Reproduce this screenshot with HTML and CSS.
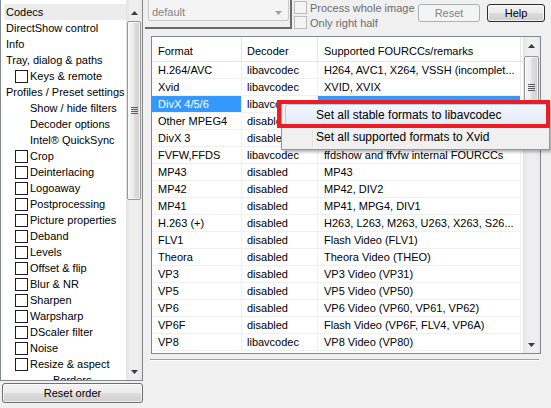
FILE: index.html
```html
<!DOCTYPE html>
<html>
<head>
<meta charset="utf-8">
<link rel="stylesheet" href="styles.css">
</head>
<body>
<div class="window">
  <div class="left">
    <div class="tree">
      <div class="tree-items">
        <div class="tree-row sel">Codecs</div>
        <div class="tree-row">DirectShow control</div>
        <div class="tree-row">Info</div>
        <div class="tree-row">Tray, dialog &amp; paths</div>
        <div class="tree-row l1"><span class="cb"></span>Keys &amp; remote</div>
        <div class="tree-row">Profiles / Preset settings</div>
        <div class="tree-row l1n">Show / hide filters</div>
        <div class="tree-row l1n">Decoder options</div>
        <div class="tree-row l1n">Intel® QuickSync</div>
        <div class="tree-row l1"><span class="cb"></span>Crop</div>
        <div class="tree-row l1"><span class="cb"></span>Deinterlacing</div>
        <div class="tree-row l1"><span class="cb"></span>Logoaway</div>
        <div class="tree-row l1"><span class="cb"></span>Postprocessing</div>
        <div class="tree-row l1"><span class="cb"></span>Picture properties</div>
        <div class="tree-row l1"><span class="cb"></span>Deband</div>
        <div class="tree-row l1"><span class="cb"></span>Levels</div>
        <div class="tree-row l1"><span class="cb"></span>Offset &amp; flip</div>
        <div class="tree-row l1"><span class="cb"></span>Blur &amp; NR</div>
        <div class="tree-row l1"><span class="cb"></span>Sharpen</div>
        <div class="tree-row l1"><span class="cb"></span>Warpsharp</div>
        <div class="tree-row l1"><span class="cb"></span>DScaler filter</div>
        <div class="tree-row l1"><span class="cb"></span>Noise</div>
        <div class="tree-row l1"><span class="cb"></span>Resize &amp; aspect</div>
        <div class="tree-row l2n">Borders</div>
      </div>
      <div class="vscroll tree-sb">
        <div class="sb-btn"><svg width="7" height="4" viewBox="0 0 7 4"><path d="M0 4L3.5 0L7 4Z" fill="#3c3c3c"/></svg></div>
        <div class="sb-thumb tree-thumb"><svg width="7" height="7" viewBox="0 0 7 7"><path d="M0 0.5H7M0 2.5H7M0 4.5H7M0 6.5H7" stroke="#5a5a5a" stroke-width="1"/></svg></div>
        <div class="sb-track"></div>
        <div class="sb-btn"><svg width="7" height="4" viewBox="0 0 7 4"><path d="M0 0L3.5 4L7 0Z" fill="#3c3c3c"/></svg></div>
      </div>
    </div>
    <button class="btn reset-order">Reset order</button>
  </div>

  <div class="right">
    <div class="topbar">
      <div class="combo-frame">
        <div class="combo"><span class="combo-text">default</span><svg class="combo-arrow" width="7" height="4" viewBox="0 0 7 4"><path d="M0 0L3.5 4L7 0Z" fill="#a0a0a0"/></svg></div>
      </div>
      <div class="checks">
        <div class="chk-row"><span class="cb dis"></span>Process whole image</div>
        <div class="chk-row"><span class="cb dis"></span>Only right half</div>
      </div>
      <button class="btn btn-sm btn-reset" disabled>Reset</button>
      <button class="btn btn-sm btn-help">Help</button>
    </div>

    <div class="listview">
      <div class="lv-body">
        <div class="lv-head">
          <div class="cell">Format</div>
          <div class="cell c2">Decoder</div>
          <div class="cell c3">Supported FOURCCs/remarks</div>
        </div>
        <div class="lv-row"><div class="cell">H.264/AVC</div><div class="cell c2">libavcodec</div><div class="cell c3">H264, AVC1, X264, VSSH (incomplet...</div></div>
        <div class="lv-row"><div class="cell">Xvid</div><div class="cell c2">libavcodec</div><div class="cell c3">XVID, XVIX</div></div>
        <div class="lv-row sel"><div class="cell">DivX 4/5/6</div><div class="cell c2">libavcodec</div><div class="cell c3">DIVX, DX50</div></div>
        <div class="lv-row"><div class="cell">Other MPEG4</div><div class="cell c2">disabled</div><div class="cell c3">FMP4, MP4V, 3IV2</div></div>
        <div class="lv-row"><div class="cell">DivX 3</div><div class="cell c2">disabled</div><div class="cell c3">DIV3, DIV4, DIV5</div></div>
        <div class="lv-row"><div class="cell">FVFW,FFDS</div><div class="cell c2">libavcodec</div><div class="cell c3">ffdshow and ffvfw internal FOURCCs</div></div>
        <div class="lv-row"><div class="cell">MP43</div><div class="cell c2">disabled</div><div class="cell c3">MP43</div></div>
        <div class="lv-row"><div class="cell">MP42</div><div class="cell c2">disabled</div><div class="cell c3">MP42, DIV2</div></div>
        <div class="lv-row"><div class="cell">MP41</div><div class="cell c2">disabled</div><div class="cell c3">MP41, MPG4, DIV1</div></div>
        <div class="lv-row"><div class="cell">H.263 (+)</div><div class="cell c2">disabled</div><div class="cell c3">H263, L263, M263, U263, X263, S26...</div></div>
        <div class="lv-row"><div class="cell">FLV1</div><div class="cell c2">disabled</div><div class="cell c3">Flash Video (FLV1)</div></div>
        <div class="lv-row"><div class="cell">Theora</div><div class="cell c2">disabled</div><div class="cell c3">Theora Video (THEO)</div></div>
        <div class="lv-row"><div class="cell">VP3</div><div class="cell c2">disabled</div><div class="cell c3">VP3 Video (VP31)</div></div>
        <div class="lv-row"><div class="cell">VP5</div><div class="cell c2">disabled</div><div class="cell c3">VP5 Video (VP50)</div></div>
        <div class="lv-row"><div class="cell">VP6</div><div class="cell c2">disabled</div><div class="cell c3">VP6 Video (VP60, VP61, VP62)</div></div>
        <div class="lv-row"><div class="cell">VP6F</div><div class="cell c2">disabled</div><div class="cell c3">Flash Video (VP6F, FLV4, VP6A)</div></div>
        <div class="lv-row"><div class="cell">VP8</div><div class="cell c2">libavcodec</div><div class="cell c3">VP8 Video (VP80)</div></div>
      </div>
      <div class="vscroll list-sb">
        <div class="sb-btn"><svg width="7" height="4" viewBox="0 0 7 4"><path d="M0 4L3.5 0L7 4Z" fill="#3c3c3c"/></svg></div>
        <div class="sb-thumb list-thumb"><svg width="7" height="7" viewBox="0 0 7 7"><path d="M0 0.5H7M0 2.5H7M0 4.5H7M0 6.5H7" stroke="#5a5a5a" stroke-width="1"/></svg></div>
        <div class="sb-track"></div>
        <div class="sb-btn"><svg width="7" height="4" viewBox="0 0 7 4"><path d="M0 0L3.5 4L7 0Z" fill="#3c3c3c"/></svg></div>
      </div>
    </div>
    <div class="separator"></div>
  </div>

  <div class="menu">
    <div class="mi hl">Set all stable formats to libavcodec</div>
    <div class="mi">Set all supported formats to Xvid</div>
  </div>
  <div class="redbox"></div>
</div>
</body>
</html>
```

FILE: styles.css
```css
* { box-sizing: border-box; }
html, body { margin: 0; padding: 0; }
body {
  width: 551px;
  height: 408px;
  overflow: hidden;
  background: #f0f0f0;
  font-family: "Liberation Sans", Arial, sans-serif;
  font-size: 11px;
  color: #000;
}
.window {
  position: relative;
  display: grid;
  grid-template-columns: 143px 406px;
  column-gap: 2px;
  width: 551px;
  height: 408px;
}

/* ---------- left tree ---------- */
.left { display: flex; flex-direction: column; }
.tree {
  height: 381px;
  display: flex;
  background: #fff;
  border: 1px solid #828790;
  border-top: 0;
}
.tree-items {
  width: 125px;
  padding-top: 4px;
  padding-left: 3px;
  overflow: hidden;
}
.tree-row {
  height: 16px;
  display: flex;
  align-items: center;
  white-space: nowrap;
  padding-left: 2px;
}
.tree-row.sel { background: #ececec; }
.tree-row.l1 { padding-left: 11px; }
.tree-row.l1n { padding-left: 26px; }
.tree-row.l2n { padding-left: 49px; }
.cb {
  flex: none;
  width: 13px;
  height: 13px;
  border: 1px solid #1e1e1e;
  background: #fff;
  margin-right: 2px;
  margin-top: 1px;
}
.cb.dis {
  border-color: #bcbcbc;
  background: #f4f4f4;
  margin-right: 3px;
  margin-top: 0;
}

/* ---------- scrollbars ---------- */
.vscroll {
  display: flex;
  flex-direction: column;
  background: linear-gradient(to right, #e4e4e4, #efefef 30%, #efefef 70%, #e8e8e8);
}
.tree-sb { width: 16px; }
.list-sb { width: 17px; }
.sb-btn {
  flex: none;
  height: 17px;
  display: flex;
  align-items: center;
  justify-content: center;
}
.tree-sb .sb-btn:first-child { margin-top: 4px; }
.sb-thumb {
  flex: none;
  margin: 0 1px;
  border: 1px solid #979797;
  border-radius: 2px;
  background: linear-gradient(to right, #f6f6f6, #ececec 45%, #dcdcdc 55%, #d2d2d2);
  display: flex;
  align-items: center;
  justify-content: center;
  box-shadow: inset 0 0 0 1px rgba(255,255,255,0.7);
}
.tree-thumb { height: 179px; }
.list-thumb { height: 63px; margin-top: 2px; }
.sb-track { flex: 1; }

/* ---------- buttons ---------- */
.btn {
  font-family: "Liberation Sans", Arial, sans-serif;
  font-size: 11px;
  color: #000;
  padding: 0;
  border: 1px solid #707070;
  border-radius: 3px;
  background: linear-gradient(#f3f3f3 0%, #ebebeb 48%, #dddddd 52%, #cfcfcf 100%);
  box-shadow: inset 0 0 0 1px rgba(255,255,255,0.65);
}
.reset-order {
  margin: 2px 0 0 2px;
  width: 141px;
  height: 20px;
}

/* ---------- top bar ---------- */
.right { display: flex; flex-direction: column; }
.topbar {
  height: 36px;
  display: flex;
  align-items: flex-start;
}
.combo-frame {
  flex: none;
  width: 147px;
  height: 29px;
  border-right: 2px solid #6a6a6a;
  border-bottom: 2px solid #6a6a6a;
  padding-left: 3px;
}
.combo {
  width: 141px;
  height: 21px;
  border: 1px solid #c9c9c9;
  border-top: 0;
  border-radius: 0 0 3px 3px;
  background: #f4f4f4;
  color: #838383;
  display: flex;
  align-items: center;
  padding: 3px 6px 0 3px;
}
.combo-arrow { margin-left: auto; margin-top: 2px; }
.checks {
  flex: none;
  width: 124px;
  margin-left: 2px;
}
.chk-row {
  height: 15px;
  display: flex;
  align-items: center;
  color: #6d6d6d;
  white-space: nowrap;
}
.btn-sm { flex: none; margin-top: 4px; height: 18px; }
.btn-reset {
  width: 62px;
  border-color: #adb2b5;
  background: #f4f4f4;
  color: #838383;
  box-shadow: none;
}
.btn-help {
  width: 58px;
  margin-left: 7px;
  border-color: #2e2e2e;
}

/* ---------- list view ---------- */
.listview {
  margin-left: 6px;
  width: 390px;
  height: 318px;
  border: 1px solid #828790;
  background: #fff;
  display: flex;
}
.lv-body {
  width: 371px;
  overflow: hidden;
}
.lv-head, .lv-row {
  display: grid;
  grid-template-columns: 90px 76px 203px;
}
.lv-head { height: 25px; border-bottom: 1px solid #e5e5e5; }
.lv-head .cell {
  border-right: 1px solid #e5e5e5;
  padding-top: 3px;
  display: flex;
  align-items: center;
}
.cell {
  padding-left: 6px;
  white-space: nowrap;
  overflow: hidden;
}
.cell.c2 { padding-left: 5px; }
.lv-row { height: 17px; }
.lv-row .cell {
  line-height: 16px;
  border-right: 1px solid #f0f0f0;
  border-bottom: 1px solid #f0f0f0;
}
.lv-row.sel .cell:first-child,
.lv-row.sel .cell.c3 {
  background: #3399ff;
  color: #fff;
}
.separator {
  margin: 5px 0 0 5px;
  width: 389px;
  height: 2px;
  border-top: 1px solid #a0a0a0;
  border-bottom: 1px solid #ffffff;
}

/* ---------- context menu (overlay) ---------- */
.menu {
  position: absolute;
  left: 281px;
  top: 101px;
  width: 269px;
  padding: 2px 2px 1px 3px;
  border: 1px solid #979797;
  background:
    linear-gradient(to right, transparent 30px, #e2e3e3 30px, #e2e3e3 31px, #ffffff 31px, #ffffff 32px, transparent 32px),
    #f0f0f0;
  box-shadow: 2px 2px 3px rgba(0,0,0,0.3);
  font-size: 12px;
}
.mi {
  height: 22px;
  display: flex;
  align-items: center;
  padding-left: 30px;
  border: 1px solid transparent;
  border-radius: 3px;
  white-space: nowrap;
}
.mi.hl {
  border-color: #b4cbe6;
  background: linear-gradient(#f2f6fc, #e2ebf6);
}
.redbox {
  position: absolute;
  left: 277px;
  top: 100px;
  width: 273px;
  height: 28px;
  border: 4px solid #ed1c24;
}
```
